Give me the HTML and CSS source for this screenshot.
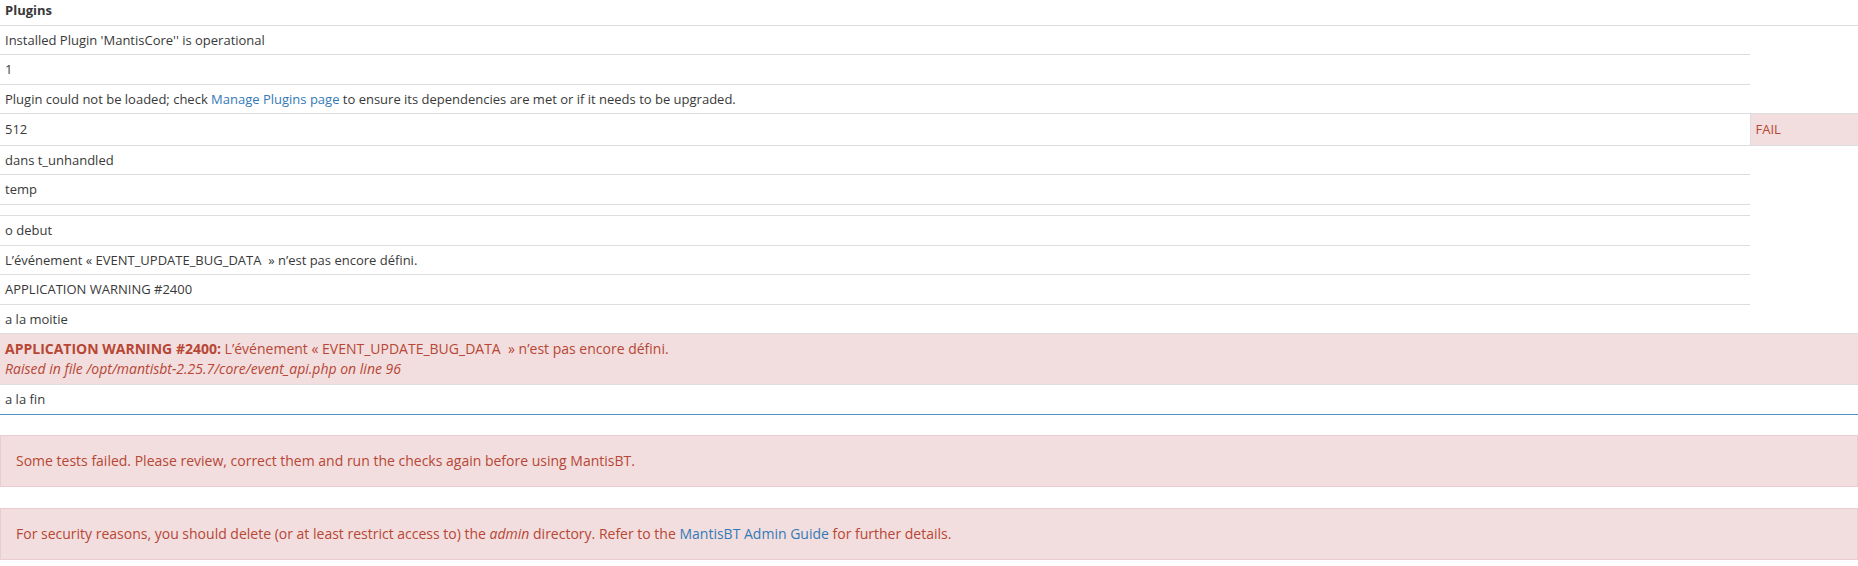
FILE: index.html
```html
<!DOCTYPE html>
<html lang="fr">
<head>
    <meta charset="UTF-8">
    <title>MantisBT - Check</title>
    <link rel="stylesheet" href="styles.css">
</head>
<body>
    <div class="widget-box">
        <table class="check-table">
            <thead>
                <tr>
                    <th colspan="2">Plugins</th>
                </tr>
            </thead>
            <tbody>
                <tr><td class="desc">Installed Plugin 'MantisCore'' is operational</td></tr>
                <tr><td>1</td></tr>
                <tr><td>Plugin could not be loaded; check <a href="#">Manage Plugins page</a> to ensure its dependencies are met or if it needs to be upgraded.</td></tr>
                <tr class="row-fail"><td>512</td><td class="result fail">FAIL</td></tr>
                <tr><td>dans t_unhandled</td></tr>
                <tr><td>temp</td></tr>
                <tr><td></td></tr>
                <tr><td>o debut</td></tr>
                <tr><td>L’événement « EVENT_UPDATE_BUG_DATA &nbsp;» n’est pas encore défini.</td></tr>
                <tr><td>APPLICATION WARNING #2400</td></tr>
                <tr><td>a la moitie</td></tr>
                <tr>
                    <td colspan="2" class="inline-error">
                        <strong>APPLICATION WARNING #2400:</strong> L’événement « EVENT_UPDATE_BUG_DATA &nbsp;» n’est pas encore défini.<br>
                        <em>Raised in file /opt/mantisbt-2.25.7/core/event_api.php on line 96</em>
                    </td>
                </tr>
                <tr><td>a la fin</td></tr>
            </tbody>
        </table>
    </div>

    <div class="alert alert-danger">
        Some tests failed. Please review, correct them and run the checks again before using MantisBT.
    </div>
    <div class="alert alert-danger">
        For security reasons, you should delete (or at least restrict access to) the <em>admin</em> directory. Refer to the <a href="#">MantisBT Admin Guide</a> for further details.
    </div>
</body>
</html>
```

FILE: styles.css
```css
* {
    margin: 0;
    padding: 0;
    box-sizing: border-box;
}
body {
    font-family: 'Open Sans', 'Liberation Sans', sans-serif;
    font-size: 13px;
    line-height: 1.42857143;
    color: #393939;
    background-color: white;
}
a {
    color: #337ab7;
    text-decoration: none;
}
.widget-box {
    border-bottom: 1px solid #5090c1;
}
.check-table {
    width: 100%;
    border-collapse: collapse;
}
.check-table th {
    text-align: left;
    font-weight: 700;
    padding: 1px 5px 5px;
    border-bottom: 1px solid #ddd;
}
.check-table td {
    padding: 5px;
    border-top: 1px solid #ddd;
    vertical-align: top;
}
.check-table td.result {
    width: 108px;
}
.check-table .row-fail td {
    padding-top: 6px;
    padding-bottom: 6px;
    border-bottom: 1px solid #ddd;
}
.check-table td.fail {
    background-color: #f2dede;
    color: #b74635;
    border-left: 1px solid #ddd;
}
.check-table td.inline-error {
    background-color: #f2dede;
    color: #b74635;
    font-size: 14px;
    line-height: 20px;
    padding: 5px;
    border-bottom: 1px solid #ddd;
}
.alert {
    padding: 15px;
    font-size: 14px;
    line-height: 20px;
    border: 1px solid #ebccd1;
    margin: 20px 0 21px;
}
.alert + .alert {
    margin-top: 0;
}
.alert-danger {
    background-color: #f2dede;
    color: #b74635;
}
```
